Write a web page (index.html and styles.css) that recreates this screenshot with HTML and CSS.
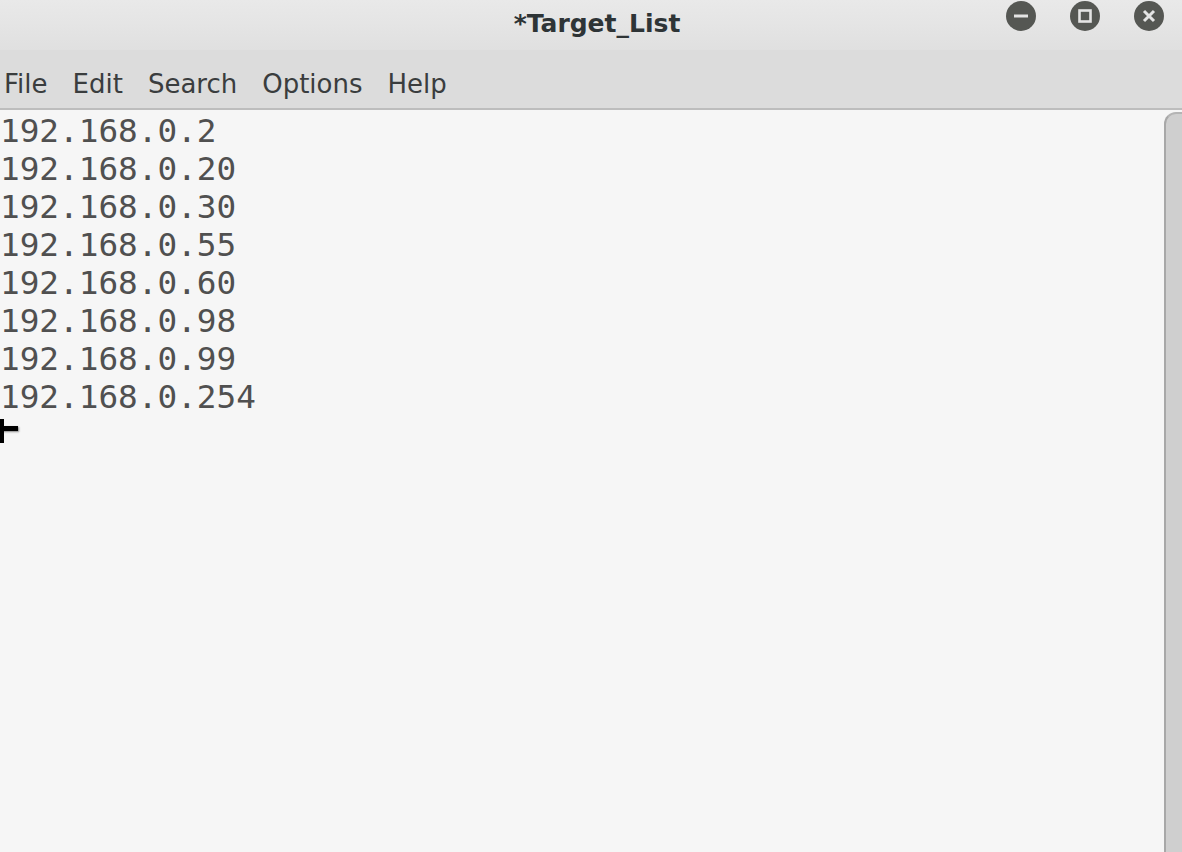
FILE: index.html
```html
<!DOCTYPE html>
<html lang="en">
<head>
  <meta charset="UTF-8">
  <title>*Target_List</title>
  <link rel="stylesheet" href="styles.css">
</head>
<body>
  <div class="window">
    <div class="titlebar">
      <span class="title">*Target_List</span>
      <div class="controls">
        <span class="btn">
          <svg width="30" height="30" viewBox="0 0 30 30"><rect x="8" y="13.5" width="14" height="3" fill="#e4e4e4"/></svg>
        </span>
        <span class="btn">
          <svg width="30" height="30" viewBox="0 0 30 30"><rect x="9.5" y="9.5" width="11" height="11" fill="none" stroke="#e4e4e4" stroke-width="2.6"/></svg>
        </span>
        <span class="btn">
          <svg width="30" height="30" viewBox="0 0 30 30"><path d="M10 10 L20 20 M20 10 L10 20" stroke="#e4e4e4" stroke-width="3"/></svg>
        </span>
      </div>
    </div>

    <div class="menubar">
      <span>File</span>
      <span>Edit</span>
      <span>Search</span>
      <span>Options</span>
      <span>Help</span>
    </div>

    <div class="editor">
      <pre class="text">192.168.0.2
192.168.0.20
192.168.0.30
192.168.0.55
192.168.0.60
192.168.0.98
192.168.0.99
192.168.0.254</pre>
      <div class="pointer"></div>
      <div class="scrollbar"></div>
    </div>
  </div>
</body>
</html>
```

FILE: styles.css
```css
body {
  margin: 0;
  background: #f6f6f6;
  overflow: hidden;
}

.window {
  width: 1182px;
  height: 852px;
  display: flex;
  flex-direction: column;
}

.titlebar {
  height: 50px;
  background: linear-gradient(#e9e9e9, #e0e0e0);
  display: flex;
  align-items: center;
  justify-content: center;
  position: relative;
}

.title {
  font-family: "DejaVu Sans", sans-serif;
  font-weight: bold;
  font-size: 25px;
  color: #2e3436;
  margin-left: 12px;
  margin-top: -3px;
}

.controls {
  position: absolute;
  right: 18px;
  top: 1px;
  display: flex;
  gap: 34px;
}

.btn {
  width: 30px;
  height: 30px;
  border-radius: 50%;
  background: #555753;
  display: block;
}

.btn svg {
  display: block;
}

.menubar {
  height: 60px;
  background: #dcdcdc;
  border-bottom: 2px solid #bdbdbd;
  display: flex;
  align-items: center;
  gap: 25px;
  padding: 10px 0 0 4px;
  box-sizing: border-box;
  font-family: "DejaVu Sans", sans-serif;
  font-size: 26px;
  color: #3a3d3e;
}

.editor {
  flex: 1;
  position: relative;
  background: #f6f6f6;
}

.text {
  margin: 0;
  padding-top: 2px;
  font-family: "DejaVu Sans Mono", monospace;
  font-size: 32.7px;
  line-height: 38px;
  color: #505050;
}

.pointer {
  position: absolute;
  left: 0;
  top: 316px;
  width: 18px;
  height: 5px;
  background: #000;
  box-shadow: 1px 1px 2px #888;
}

.pointer::before {
  content: "";
  position: absolute;
  left: 0;
  top: -7px;
  width: 4px;
  height: 24px;
  background: #000;
}

.scrollbar {
  position: absolute;
  right: 0;
  top: 2px;
  bottom: 0;
  width: 16px;
  background: #cfcfcf;
  border-left: 2px solid #a8a8a8;
  border-top: 2px solid #b4b4b4;
  border-top-left-radius: 12px;
}
```
